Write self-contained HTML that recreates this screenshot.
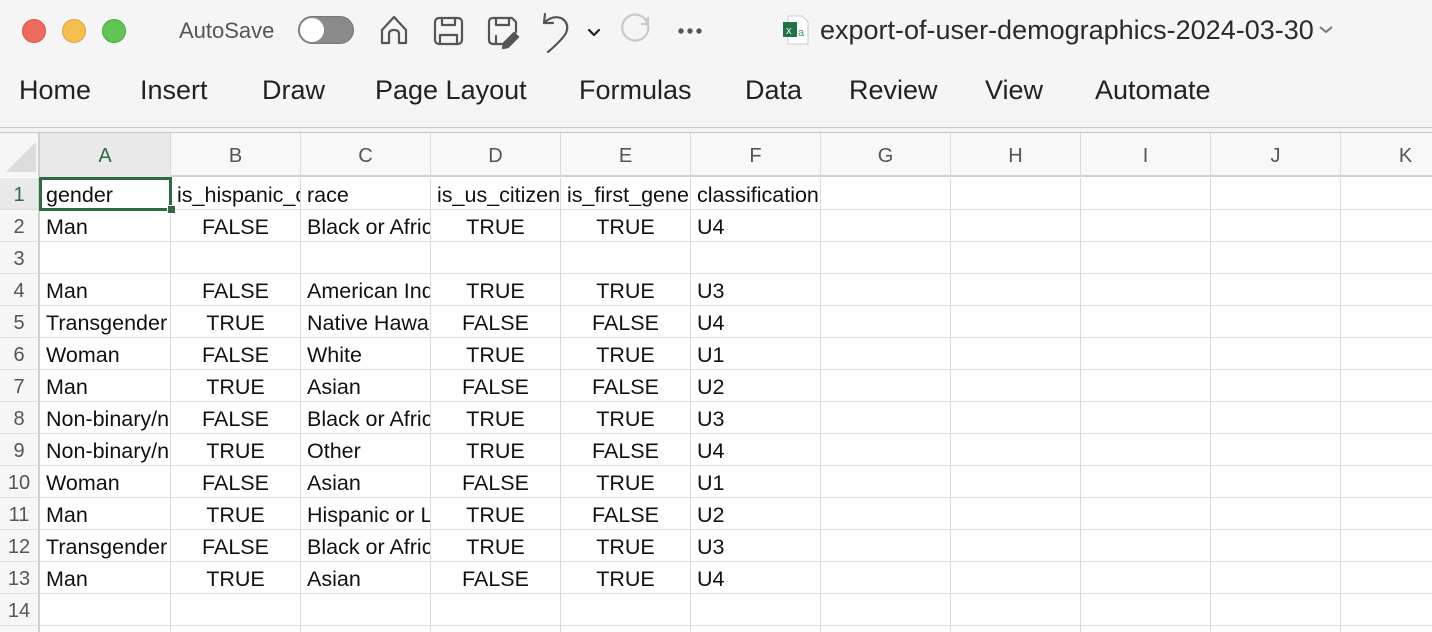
<!DOCTYPE html>
<html><head><meta charset="utf-8"><style>
*{margin:0;padding:0;box-sizing:border-box}
html,body{width:1432px;height:632px;overflow:hidden}
body{background:#fff;font-family:"Liberation Sans",sans-serif;position:relative}
.top{position:absolute;left:0;top:0;width:1432px;height:127px;background:#f5f5f5}
.sep{position:absolute;left:0;top:127px;width:1432px;height:6px;background:#f3f3f3;border-top:1px solid #c8c8c8;border-bottom:1px solid #c8c8c8}
.dot{position:absolute;top:19px;width:24px;height:24px;border-radius:50%}
.t{position:absolute;color:#2b2b2b;white-space:nowrap}
.menu{position:absolute;top:75px;font-size:27px;color:#222;white-space:nowrap}
.hdr{position:absolute;top:133px;height:44px;background:#f8f8f8;border-bottom:2px solid #d0d0d0}
.ch{position:absolute;top:133px;height:44px;line-height:46px;text-align:center;font-size:20px;color:#555;border-right:1px solid #dadada}
.rh{position:absolute;left:0;width:40px;height:32px;line-height:35px;text-align:center;font-size:20px;color:#555;background:#f6f6f6;border-right:2px solid #d0d0d0;border-bottom:1px solid #dadada}
.c{position:absolute;height:32px;line-height:34px;font-size:21.5px;color:#111;border-right:1px solid #dadada;border-bottom:1px solid #dadada;white-space:nowrap;overflow:hidden;padding-left:6px}
.m{text-align:center;padding-left:0}
</style></head><body>
<div class="top"></div>
<div class="dot" style="left:22px;background:#ec6a5e;border:1px solid #d5584c"></div>
<div class="dot" style="left:62px;background:#f4bf4f;border:1px solid #d9a33c"></div>
<div class="dot" style="left:102px;background:#61c554;border:1px solid #4ea843"></div>
<div class="t" style="left:179px;top:18px;font-size:22px;color:#555">AutoSave</div>
<div style="position:absolute;left:298px;top:16px;width:56px;height:28px;border-radius:14px;background:#8a8a8a;border:1px solid #777"><div style="position:absolute;left:1px;top:1px;width:24px;height:24px;border-radius:50%;background:#fff"></div></div>
<svg style="position:absolute;left:370px;top:10px" width="340" height="45" viewBox="0 0 340 45" fill="none" stroke="#555" stroke-width="2.2" stroke-linecap="round" stroke-linejoin="round">
<path d="M12 33V20L24 7L36 20V33H29V24Q29 20 24 20Q19 20 19 24V33Z"/>
<rect x="65" y="8" width="27" height="26" rx="4"/><path d="M72 8V15H85V8M70 34V25H87V34"/>
<path d="M133 34H124Q119 34 119 30V12Q119 8 123 8H142L146 12V22M126 8V15H139V8M126 34V26"/>
<path d="M134 33L144 23L148 27L138 37L133 38Z" fill="#555"/>
<path d="M175 4L174 13L183 13M174 13Q182 5 191 8Q200 13 196 23Q192 30 178 42"/>
<path d="M219 20L224 25L229 20" stroke="#222"/>
<path d="M277 12A13 13 0 1 0 278 15M278 8V14H272" stroke="#c8c8c8"/>
<circle cx="311" cy="21" r="1.6" fill="#555"/><circle cx="320" cy="21" r="1.6" fill="#555"/><circle cx="329" cy="21" r="1.6" fill="#555"/>
</svg>
<svg style="position:absolute;left:782px;top:14px" width="30" height="32" viewBox="0 0 30 32"><path d="M6 2H20L26 8V30H6Z" fill="#fff" stroke="#ccc"/><rect x="1" y="8" width="14" height="15" fill="#217346"/><text x="4" y="20" font-size="11" fill="#fff" font-family="Liberation Sans">x</text><text x="16" y="22" font-size="11" fill="#3a9a5a" font-family="Liberation Sans">a</text></svg>
<div class="t" style="left:820px;top:15px;font-size:27px;color:#2b2b2b">export-of-user-demographics-2024-03-30</div>
<svg style="position:absolute;left:1318px;top:24px" width="16" height="12"><path d="M2 3L8 8L14 3" fill="none" stroke="#777" stroke-width="2"/></svg>
<div class="menu" style="left:19px">Home</div>
<div class="menu" style="left:140px">Insert</div>
<div class="menu" style="left:262px">Draw</div>
<div class="menu" style="left:375px">Page Layout</div>
<div class="menu" style="left:579px">Formulas</div>
<div class="menu" style="left:745px">Data</div>
<div class="menu" style="left:849px">Review</div>
<div class="menu" style="left:985px">View</div>
<div class="menu" style="left:1095px">Automate</div>
<div class="sep"></div>
<div class="hdr" style="left:0;width:1432px"></div>
<div style="position:absolute;left:0;top:133px;width:40px;height:44px;background:#f6f6f6;border-right:2px solid #d0d0d0"></div>
<svg style="position:absolute;left:4px;top:140px" width="34" height="34"><path d="M32 2V32H2Z" fill="#dcdcdc"/></svg>
<div id="g"></div>
<script>
var cols=[40,171,301,431,561,691,821,951,1081,1211,1341,1471],L="ABCDEFGHIJK",h='';
for(var i=0;i<11;i++){h+='<div class="ch" style="left:'+cols[i]+'px;width:'+(cols[i+1]-cols[i])+'px;'+(i==0?'background:#e9e9e9;color:#2e6b45;':'')+'">'+L[i]+'</div>';}
var d=[["gender","is_hispanic_or_latino","race","is_us_citizen","is_first_generation","classification"],
["Man","FALSE","Black or African","TRUE","TRUE","U4"],[],
["Man","FALSE","American Indian","TRUE","TRUE","U3"],
["Transgender","TRUE","Native Hawaiian","FALSE","FALSE","U4"],
["Woman","FALSE","White","TRUE","TRUE","U1"],
["Man","TRUE","Asian","FALSE","FALSE","U2"],
["Non-binary/non","FALSE","Black or African","TRUE","TRUE","U3"],
["Non-binary/non","TRUE","Other","TRUE","FALSE","U4"],
["Woman","FALSE","Asian","FALSE","TRUE","U1"],
["Man","TRUE","Hispanic or Latino","TRUE","FALSE","U2"],
["Transgender","FALSE","Black or African","TRUE","TRUE","U3"],
["Man","TRUE","Asian","FALSE","TRUE","U4"],[],[]];
for(var r=0;r<15;r++){var y=178+32*r;
h+='<div class="rh" style="top:'+y+'px;'+(r==0?'background:#e9e9e9;color:#2e6b45;':'')+'">'+(r+1)+'</div>';
for(var c=0;c<11;c++){var v=(d[r]&&d[r][c])||'';var mid=(r>0&&(c==1||c==3||c==4));
var ov=(r==0&&c==5)?'overflow:visible;':'';
h+='<div class="c'+(mid?' m':'')+'" style="left:'+cols[c]+'px;top:'+y+'px;width:'+(cols[c+1]-cols[c])+'px;'+ov+'">'+v+'</div>';}}
h+='<div style="position:absolute;left:39px;top:177px;width:133px;height:34px;border:3px solid #2e6b45"></div>';
h+='<div style="position:absolute;left:167px;top:205px;width:9px;height:9px;background:#2e6b45;border:1px solid #fff"></div>';
document.getElementById('g').innerHTML=h;
</script>
</body></html>
